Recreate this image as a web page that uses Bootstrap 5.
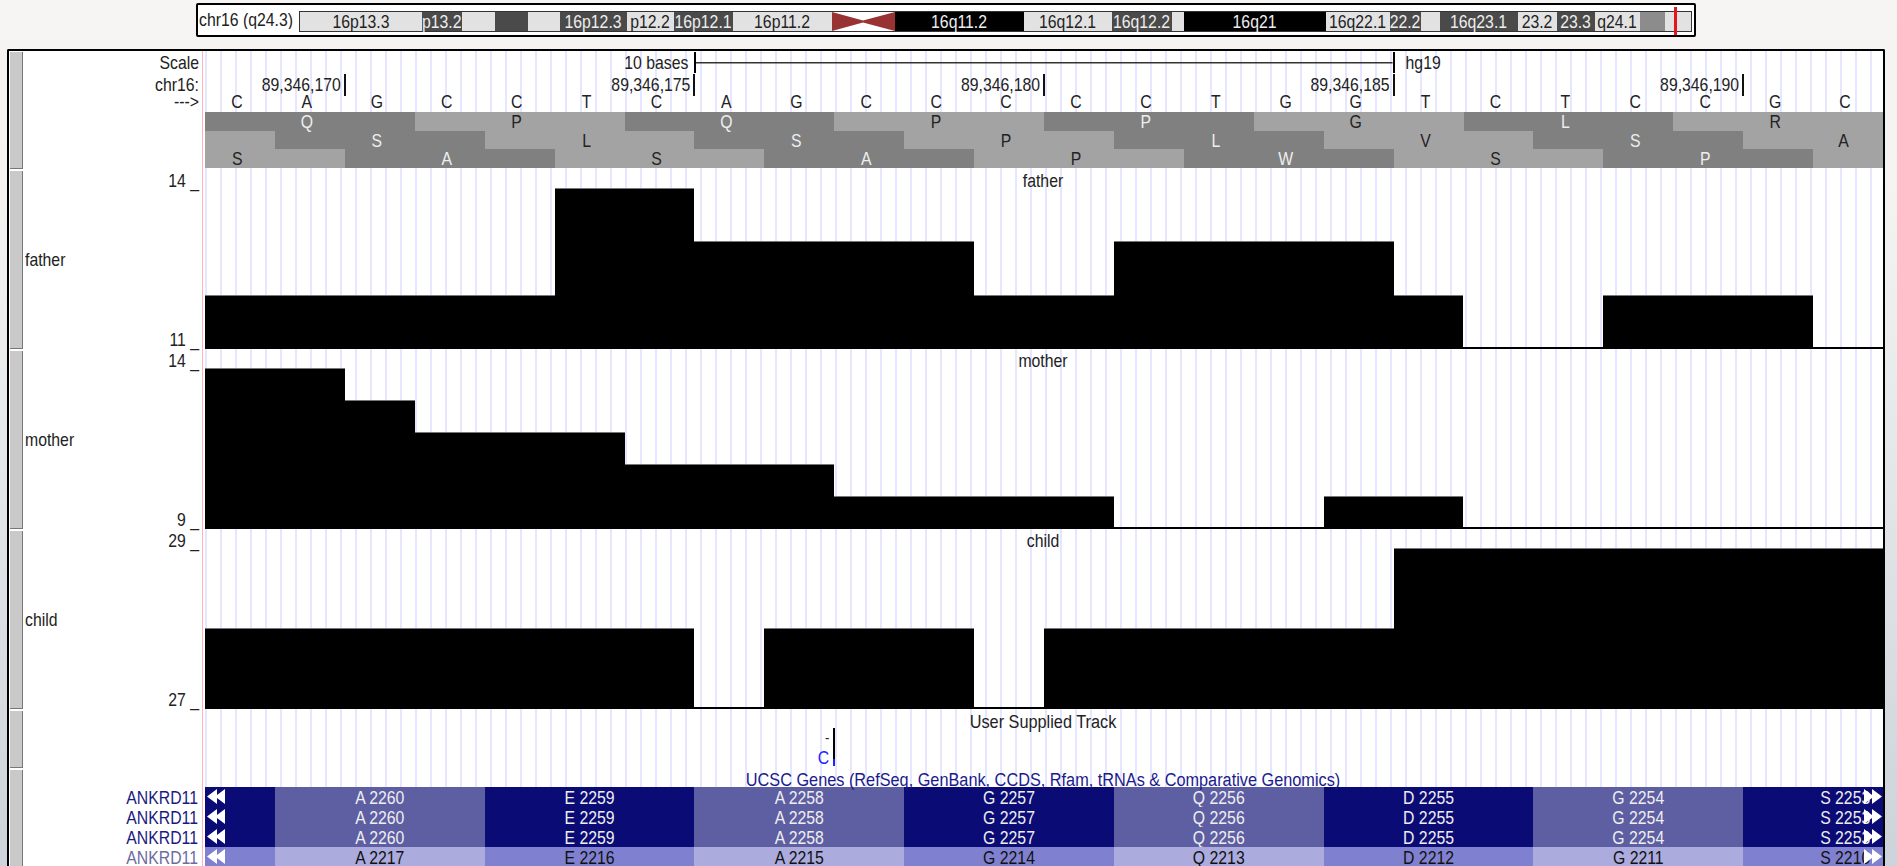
<!DOCTYPE html>
<html lang="en">
<head>
  <meta charset="UTF-8">
  <title>UCSC Genome Browser - chr16</title>
  <link rel="stylesheet" href="https://cdn.jsdelivr.net/npm/bootstrap@5.3.0/dist/css/bootstrap.min.css">
  <style>
    html, body { height: 100%; overflow: hidden; }
    body {
      background: linear-gradient(#f6f5f3 0, #f4f3f2 200px, #cdd3da 866px);
      font: 15.8px/20px "Liberation Sans", Arial, sans-serif;
      color: #222;
    }
    /* text in the picture is a bit stretched vertically */
    .tx { display: inline-block; transform: scaleY(1.12); white-space: nowrap; }

    /* chromosome ideogram */
    .ideo-box {
      width: 1500px; height: 34px; margin: 3px 0 0 196px; padding: 6px 2px 0 1px;
      background: #fff; border: 2px solid #000; border-radius: 2px;
    }
    .ideo-name { flex: 0 0 100px; line-height: 18px; }
    .ideo-bar { position: relative; height: 21px; border: 1px solid #333; }
    .band { height: 100%; line-height: 19px; text-align: center; }
    .band-white { background: #e2e2e2; color: #222; }
    .band-dark { background: #4a4a4a; color: #eee; }
    .band-mid { background: #8c8c8c; }
    .band-black { background: #000; color: #eee; }
    .band svg { display: block; width: 100%; height: 100%; }
    .ideo-mark { position: absolute; left: 1374px; top: -5px; width: 3px; height: 28px; background: #e8141c; }

    /* track frame */
    .trk-frame {
      width: 1878px; margin: 12px 0 0 7px;
      background: #fff; border: 2px solid #000; border-bottom: 0; border-radius: 2px 2px 0 0;
    }
    .trk-handle {
      flex: 0 0 13px; margin: 1px 0 1px 1px;
      background: #c9c9c9; border-right: 1px solid #777; border-bottom: 1px solid #777;
    }
    .trk-side { position: relative; flex: 0 0 179px; padding-right: 3px; }
    .trk-axis { padding-top: 1px; }
    .trk-name { padding-left: 2px; margin-top: -1px; }
    .trk-plot {
      flex: 0 0 1681px; padding-left: 2px;
      border-left: 1px solid #ffb4b4;
      background: linear-gradient(90deg, transparent 0 11px, #e6e6ff 11px 13px, transparent 13px) 6px 0 / 15px 100%;
    }
    .trk-head { height: 119px; }
    .trk-wig { height: 180px; }
    .trk-user { height: 59px; }
    .trk-genes { height: 100px; }

    .base-grid { display: grid; grid-template-columns: repeat(24, 1fr); }
    .rw-scale { height: 22px; margin-top: 1px; line-height: 21px; }
    .rw-pos { height: 18px; line-height: 22px; }
    .rw-base { height: 20px; line-height: 19px; }
    .scale-text { padding-right: 6px; text-align: right; }
    .scale-bar {
      border-left: 2px solid #000; border-right: 2px solid #000; margin-right: -1px; height: 21px;
      background: linear-gradient(#333, #333) center / 100% 1.5px no-repeat;
    }
    .scale-db { padding-left: 12px; }
    .pos-cell { text-align: right; padding-right: 3px; border-right: 2px solid #111; margin-right: -1px; }
    .base-cell { text-align: center; padding-right: 6px; }
    .aa-row { height: 18.67px; line-height: 19px; }
    .aa-cell { text-align: center; padding-right: 6px; }
    .aa-start { text-align: left; padding: 0 0 0 27px; }
    .aa-end { text-align: left; padding: 0 0 0 95px; }
    .aa-dark { background: #808080; color: #eee; }
    .aa-light { background: #a3a3a3; color: #222; }

    /* wiggle plots */
    .wig-title { height: 18px; line-height: 22px; text-align: center; margin-right: 2px; }
    .wig-title-wide { font-size: 16.3px; }
    .wig-area { height: 161px; align-items: end; }
    .wig-bar { background: #000; border-top: 1px solid #777; }
    .wig-zero { border-top: 0; }

    /* user track */
    .user-cell {
      height: 38px; margin-right: -1px; padding-right: 4px; text-align: right;
      border-right: 2px solid #000;
      border-image: linear-gradient(#000 79%, #2222ff 79%) 1;
    }
    .user-top { line-height: 22px; height: 22px; font-size: 13px; }
    .user-alt { line-height: 16px; color: #2222ff; }

    /* gene rows */
    .gene-title { position: relative; z-index: 1; line-height: 20px; color: #1a1a8c; }
    .gene-name { padding: 1px 1px 0 0; margin-bottom: -1px; line-height: 20px; color: #1a1a80; }
    .gene-faded { color: #6c6c9e; }
    .gene-row { position: relative; height: 19px; margin-bottom: 1px; line-height: 21px; text-align: center; }
    .ex-dark { background: #0b0b75; color: #eee; }
    .ex-light { background: #5e5ea3; color: #eee; }
    .low .ex-dark { background: #8080d0; color: #111; }
    .low .ex-light { background: #ababde; color: #111; }
    .ex-last { text-align: left; padding-left: 77px; white-space: nowrap; overflow: hidden; }
    .gene-arrow { position: absolute; top: 2px; width: 18px; height: 15px; fill: #fff; }
    .arrow-l { left: 2px; }
    .arrow-r { right: 1px; }
  </style>
</head>
<body>

  <!-- ideogram -->
  <div class="ideo-box d-flex">
    <div class="ideo-name"><span class="tx">chr16 (q24.3)</span></div>
    <div class="ideo-bar d-flex flex-grow-1" id="ideoBar"></div>
  </div>

  <div class="trk-frame">

    <!-- ruler, bases, amino acids -->
    <div class="trk-head d-flex">
      <div class="trk-handle"></div>
      <div class="trk-side text-end">
        <div class="rw-scale"><span class="tx">Scale</span></div>
        <div class="rw-pos"><span class="tx">chr16:</span></div>
        <div class="rw-base"><span class="tx">---&gt;</span></div>
      </div>
      <div class="trk-plot">
        <div class="base-grid rw-scale">
          <div class="scale-text" style="grid-column: span 7"><span class="tx">10 bases</span></div>
          <div class="scale-bar" style="grid-column: span 10"></div>
          <div class="scale-db" style="grid-column: span 7"><span class="tx">hg19</span></div>
        </div>
        <div class="base-grid rw-pos" id="posRow"></div>
        <div class="base-grid rw-base" id="baseRow"></div>
        <div class="base-grid aa-row" id="aa0"></div>
        <div class="base-grid aa-row" id="aa1"></div>
        <div class="base-grid aa-row" id="aa2"></div>
      </div>
    </div>

    <!-- father -->
    <div class="trk-wig d-flex">
      <div class="trk-handle"></div>
      <div class="trk-side trk-axis d-flex flex-column justify-content-between text-end">
        <div><span class="tx">14 _</span></div>
        <div class="text-start trk-name"><span class="tx">father</span></div>
        <div><span class="tx">11 _</span></div>
      </div>
      <div class="trk-plot">
        <div class="wig-title"><span class="tx">father</span></div>
        <div class="base-grid wig-area" id="wigFather"></div>
      </div>
    </div>

    <!-- mother -->
    <div class="trk-wig d-flex">
      <div class="trk-handle"></div>
      <div class="trk-side trk-axis d-flex flex-column justify-content-between text-end">
        <div><span class="tx">14 _</span></div>
        <div class="text-start trk-name"><span class="tx">mother</span></div>
        <div><span class="tx">9 _</span></div>
      </div>
      <div class="trk-plot">
        <div class="wig-title"><span class="tx">mother</span></div>
        <div class="base-grid wig-area" id="wigMother"></div>
      </div>
    </div>

    <!-- child -->
    <div class="trk-wig d-flex">
      <div class="trk-handle"></div>
      <div class="trk-side trk-axis d-flex flex-column justify-content-between text-end">
        <div><span class="tx">29 _</span></div>
        <div class="text-start trk-name"><span class="tx">child</span></div>
        <div><span class="tx">27 _</span></div>
      </div>
      <div class="trk-plot">
        <div class="wig-title"><span class="tx">child</span></div>
        <div class="base-grid wig-area" id="wigChild"></div>
      </div>
    </div>

    <!-- user supplied -->
    <div class="trk-user d-flex">
      <div class="trk-handle"></div>
      <div class="trk-side"></div>
      <div class="trk-plot">
        <div class="wig-title wig-title-wide"><span class="tx">User Supplied Track</span></div>
        <div class="base-grid">
          <div class="user-cell" style="grid-column: span 9">
            <div class="user-top"><span class="tx">-</span></div>
            <div class="user-alt"><span class="tx">C</span></div>
          </div>
        </div>
      </div>
    </div>

    <!-- genes -->
    <div class="trk-genes d-flex">
      <div class="trk-handle"></div>
      <div class="trk-side text-end">
        <div class="wig-title"></div>
        <div class="gene-name"><span class="tx">ANKRD11</span></div>
        <div class="gene-name"><span class="tx">ANKRD11</span></div>
        <div class="gene-name"><span class="tx">ANKRD11</span></div>
        <div class="gene-name gene-faded"><span class="tx">ANKRD11</span></div>
      </div>
      <div class="trk-plot">
        <div class="wig-title wig-title-wide gene-title"><span class="tx">UCSC Genes (RefSeq, GenBank, CCDS, Rfam, tRNAs &amp; Comparative Genomics)</span></div>
        <div id="geneRows"></div>
      </div>
    </div>
  </div>

  <script src="https://cdn.jsdelivr.net/npm/bootstrap@5.3.0/dist/js/bootstrap.bundle.min.js"></script>
  <script>
    const tx = s => `<span class="tx">${s}</span>`;

    // ideogram bands: label, width, style
    const bands = [
      ['16p13.3', 122, 'white'], ['p13.2', 39, 'dark'], ['', 33, 'white'], ['', 33, 'dark'], ['', 32, 'white'],
      ['16p12.3', 67, 'dark'], ['p12.2', 47, 'white'], ['16p12.1', 59, 'dark'], ['16p11.2', 99, 'white'],
      ['cen', 63, ''], ['16q11.2', 129, 'black'], ['16q12.1', 88, 'white'], ['16q12.2', 60, 'dark'],
      ['', 12, 'white'], ['16q21', 142, 'black'], ['16q22.1', 64, 'white'], ['22.2', 31, 'dark'],
      ['', 19, 'white'], ['16q23.1', 78, 'dark'], ['23.2', 39, 'white'], ['23.3', 38, 'dark'],
      ['q24.1', 45, 'white'], ['', 25, 'mid'], ['', 26, 'white']
    ];
    const ideo = document.getElementById('ideoBar');
    ideo.innerHTML = bands.map(([name, w, kind]) => {
      if (name === 'cen') {
        return `<div class="band" style="flex: 0 0 ${w}px"><svg viewBox="0 0 63 20" preserveAspectRatio="none"><polygon points="0,0 31,9 63,0 63,20 31,11 0,20" fill="#993333"/></svg></div>`;
      }
      return `<div class="band band-${kind}" style="flex: 0 0 ${w}px">${name ? tx(name) : ''}</div>`;
    }).join('') + '<div class="ideo-mark"></div>';

    // position ruler
    const pos = [[2, '89,346,170'], [5, '89,346,175'], [5, '89,346,180'], [5, '89,346,185'], [5, '89,346,190']];
    document.getElementById('posRow').innerHTML = pos.map(([n, t]) =>
      `<div class="pos-cell" style="grid-column: span ${n}">${tx(t)}</div>`).join('');

    // bases
    document.getElementById('baseRow').innerHTML = 'CAGCCTCAGCCCCCTGGTCTCCGC'.split('').map(b =>
      `<div class="base-cell">${tx(b)}</div>`).join('');

    // amino acid frames: [span, letter, dark?, extra class for cut-off codons]
    const frames = [
      [[3, 'Q', 1], [3, 'P', 0], [3, 'Q', 1], [3, 'P', 0], [3, 'P', 1], [3, 'G', 0], [3, 'L', 1], [3, 'R', 0]],
      [[1, '', 0], [3, 'S', 1], [3, 'L', 0], [3, 'S', 1], [3, 'P', 0], [3, 'L', 1], [3, 'V', 0], [3, 'S', 1], [2, 'A', 0, 'aa-end']],
      [[2, 'S', 0, 'aa-start'], [3, 'A', 1], [3, 'S', 0], [3, 'A', 1], [3, 'P', 0], [3, 'W', 1], [3, 'S', 0], [3, 'P', 1], [1, '', 0]]
    ];
    frames.forEach((cells, i) => {
      document.getElementById('aa' + i).innerHTML = cells.map(([n, a, dark, cls]) =>
        `<div class="aa-cell ${dark ? 'aa-dark' : 'aa-light'} ${cls || ''}" style="grid-column: span ${n}">${a ? tx(a) : ''}</div>`).join('');
    });

    // wiggle heights: [bases, height px]
    const wigs = {
      wigFather: [[5, 54], [2, 161], [4, 108], [2, 54], [4, 108], [1, 54], [2, 2], [3, 54], [1, 2]],
      wigMother: [[2, 161], [1, 129], [3, 97], [3, 65], [4, 33], [3, 2], [2, 33], [6, 2]],
      wigChild: [[7, 81], [1, 2], [3, 81], [1, 2], [5, 81], [7, 161]]
    };
    Object.keys(wigs).forEach(id => {
      document.getElementById(id).innerHTML = wigs[id].map(([n, h]) =>
        `<div class="wig-bar ${h < 3 ? 'wig-zero' : ''}" style="grid-column: span ${n}; height: ${h}px"></div>`).join('');
    });

    // gene rows
    const leftArrow = '<svg class="gene-arrow arrow-l" viewBox="0 0 18 15"><polygon points="10,0 10,15 0,7.5"/><polygon points="18,0 18,15 8,7.5"/></svg>';
    const rightArrow = '<svg class="gene-arrow arrow-r" viewBox="0 0 18 15"><polygon points="0,0 0,15 10,7.5"/><polygon points="8,0 8,15 18,7.5"/></svg>';
    const exons = (a, e, a2, g, q, d, g2, s) => [['', 1, 1], [a, 3, 0], [e, 3, 1], [a2, 3, 0], [g, 3, 1], [q, 3, 0], [d, 3, 1], [g2, 3, 0], [s, 2, 1]];
    const rowA = exons('A 2260', 'E 2259', 'A 2258', 'G 2257', 'Q 2256', 'D 2255', 'G 2254', 'S 2253');
    const rowB = exons('A 2217', 'E 2216', 'A 2215', 'G 2214', 'Q 2213', 'D 2212', 'G 2211', 'S 2210');
    const geneRow = (cells, cls) => `<div class="base-grid gene-row ${cls}">` + cells.map(([t, n, dark], i) =>
      `<div class="${dark ? 'ex-dark' : 'ex-light'} ${i === 8 ? 'ex-last' : ''}" style="grid-column: span ${n}">${t ? tx(t) : ''}</div>`).join('') +
      leftArrow + rightArrow + '</div>';
    document.getElementById('geneRows').innerHTML = geneRow(rowA, '') + geneRow(rowA, '') + geneRow(rowA, '') + geneRow(rowB, 'low');
  </script>
</body>
</html>
